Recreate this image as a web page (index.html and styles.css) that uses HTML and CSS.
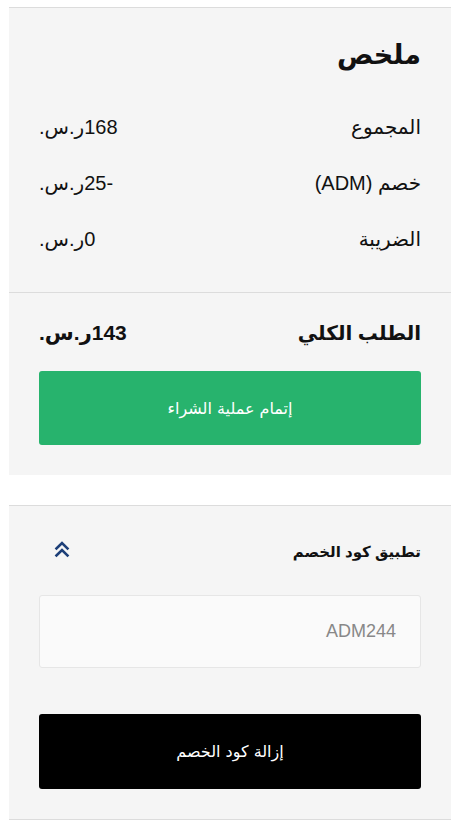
FILE: index.html
```html
<!DOCTYPE html>
<html lang="ar" dir="rtl">
<head>
<meta charset="utf-8">
<title>ملخص</title>
<link rel="stylesheet" href="styles.css">
</head>
<body>
<main class="page">
  <section class="card summary">
    <div class="summary-top">
      <h2 class="title">ملخص</h2>
      <div class="row"><span class="label">المجموع</span><span class="value">168ر.س.</span></div>
      <div class="row"><span class="label">خصم (ADM)</span><span class="value">-25ر.س.</span></div>
      <div class="row"><span class="label">الضريبة</span><span class="value">0ر.س.</span></div>
    </div>
    <div class="summary-bottom">
      <div class="total-row"><span class="total-label">الطلب الكلي</span><span class="total-value">143ر.س.</span></div>
      <button class="btn btn-green" type="button">إتمام عملية الشراء</button>
    </div>
  </section>

  <section class="card coupon">
    <div class="coupon-head">
      <span class="coupon-title">تطبيق كود الخصم</span>
      <svg class="chev" width="16" height="18" viewBox="0 0 16 18" aria-hidden="true">
        <polyline points="2.5,8.5 8,3 13.5,8.5" fill="none" stroke="#1d3f78" stroke-width="2.6" stroke-linecap="square"/>
        <polyline points="2.5,15.5 8,10 13.5,15.5" fill="none" stroke="#1d3f78" stroke-width="2.6" stroke-linecap="square"/>
      </svg>
    </div>
    <div class="input">ADM244</div>
    <button class="btn btn-black" type="button">إزالة كود الخصم</button>
  </section>
</main>
</body>
</html>
```

FILE: styles.css
```css
html, body {
  margin: 0;
  padding: 0;
  background: #ffffff;
}
body {
  font-family: "Liberation Sans", "DejaVu Sans", sans-serif;
  color: #111;
}
.page {
  width: 442px;
  margin: 0 7px 0 0;
  padding-top: 7px;
  display: flex;
  flex-direction: column;
  gap: 30px;
}
.card {
  background: #f5f5f5;
  border-top: 1px solid #dcdcdc;
}
.summary-top {
  padding: 32px 30px 41px;
  display: flex;
  flex-direction: column;
}
.title {
  margin: 0 0 45px;
  font-size: 27px;
  line-height: 30px;
  font-weight: bold;
}
.row {
  display: flex;
  justify-content: space-between;
  align-items: center;
  font-size: 20px;
  line-height: 24px;
  height: 24px;
}
.row + .row {
  margin-top: 32px;
}
.summary-bottom {
  border-top: 1px solid #dcdcdc;
  padding: 26px 30px 30px;
  display: flex;
  flex-direction: column;
  gap: 24px;
}
.total-row {
  display: flex;
  justify-content: space-between;
  align-items: center;
  height: 28px;
  font-size: 20px;
  font-weight: bold;
}
.total-value {
  font-size: 21px;
}
.btn {
  display: flex;
  align-items: center;
  justify-content: center;
  width: 100%;
  border: none;
  border-radius: 3px;
  font-family: "DejaVu Sans", sans-serif;
  font-size: 16px;
  color: #fff;
  padding: 0;
}
.btn-green {
  height: 74px;
  background: #27b36d;
}
.coupon {
  padding: 34px 30px 30px;
  border-bottom: 1px solid #dcdcdc;
  display: flex;
  flex-direction: column;
}
.coupon-head {
  display: flex;
  justify-content: space-between;
  align-items: center;
  height: 24px;
}
.coupon-title {
  font-size: 15px;
  font-weight: bold;
}
.chev {
  margin-left: 15px;
  margin-top: -6px;
}
.input {
  margin-top: 31px;
  height: 73px;
  box-sizing: border-box;
  background: #fafafa;
  border: 1px solid #e6e6e6;
  border-radius: 3px;
  display: flex;
  align-items: center;
  padding: 0 24px;
  font-size: 18px;
  color: #888;
}
.btn-black {
  margin-top: 46px;
  height: 75px;
  background: #000;
}
```
